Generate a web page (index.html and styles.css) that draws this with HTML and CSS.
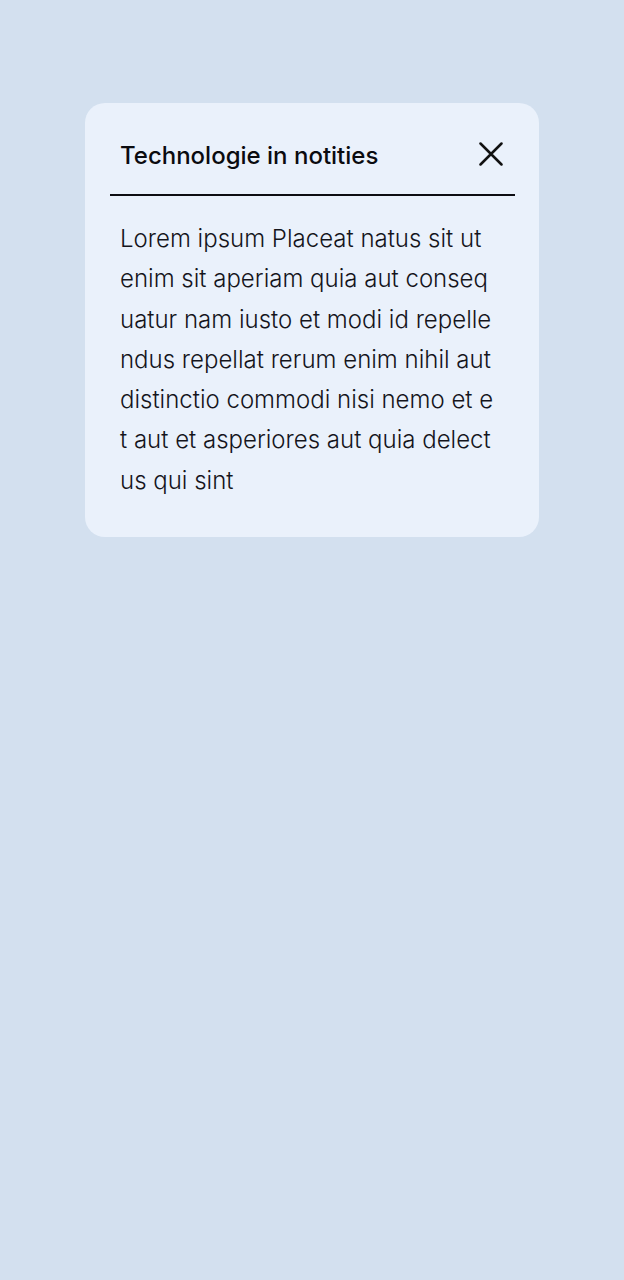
FILE: index.html
```html
<!DOCTYPE html>
<html lang="nl">
<head>
    <meta charset="UTF-8">
    <meta name="viewport" content="width=device-width, initial-scale=1.0">
    <title>Technologie in notities</title>
    <link rel="stylesheet" href="styles.css">
</head>
<body>
    <div class="dialog">
        <div class="dialog-header">
            <h2 class="dialog-title">Technologie in notities</h2>
            <button class="close-btn" aria-label="Sluiten">
                <svg width="24" height="24" viewBox="0 0 24 24">
                    <path d="M1.5 1.5 L22.5 22.5 M22.5 1.5 L1.5 22.5" stroke="#111" stroke-width="2.5" stroke-linecap="round" fill="none"/>
                </svg>
            </button>
        </div>
        <p class="dialog-body">Lorem ipsum Placeat natus sit ut enim sit aperiam quia aut consequatur nam iusto et modi id repellendus repellat rerum enim nihil aut distinctio commodi nisi nemo et et aut et asperiores aut quia delectus qui sint</p>
    </div>
</body>
</html>
```

FILE: styles.css
```css
body {
    margin: 0;
    min-height: 1280px;
    background-color: #d3e0ef;
    font-family: Inter, "Noto Sans", sans-serif;
    padding-top: 103px;
    box-sizing: border-box;
}

/* Dialog card */
.dialog {
    width: 454px;
    margin-left: 85px;
    background-color: #eaf1fb;
    border-radius: 20px;
    padding: 0 24px 36px 25px;
    box-sizing: border-box;
}

.dialog-header {
    display: flex;
    align-items: center;
    justify-content: space-between;
    padding: 38px 12px 23px 10px;
    border-bottom: 2px solid #0d0d12;
}

.dialog-title {
    margin: 0;
    font-size: 24px;
    line-height: 30px;
    font-weight: 500;
    color: #0b0b0f;
}

.close-btn {
    border: none;
    background: none;
    padding: 0;
    width: 24px;
    height: 24px;
    margin-top: -4px;
    cursor: pointer;
    display: flex;
}

.dialog-body {
    margin: 23px 0 0;
    padding: 0 18px 0 10px;
    font-size: 24px;
    line-height: 40.3px;
    font-weight: 300;
    color: #15151c;
    word-break: break-all;
}
```
